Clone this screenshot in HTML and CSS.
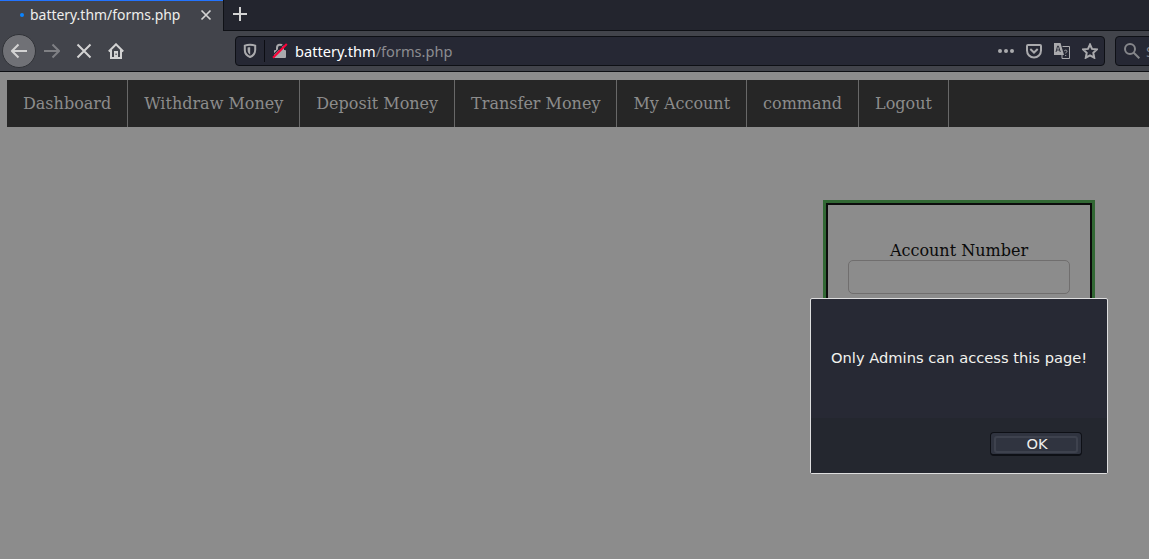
FILE: index.html
```html
<!DOCTYPE html>
<html lang="en">
<head>
<meta charset="utf-8">
<title>battery.thm/forms.php</title>
<link rel="stylesheet" href="styles.css">
</head>
<body>
<header class="browser">
  <div class="tabs">
    <div class="tab">
      <span class="loading"></span>
      <span class="tab-title">battery.thm/forms.php</span>
      <svg class="tab-close" width="12" height="12" viewBox="0 0 12 12"><path d="M1.500 1.500l9 9M10.500 1.500l-9 9"/></svg>
    </div>
    <div class="tab-strip"><svg class="new-tab" width="14" height="14" viewBox="0 0 14 14"><path d="M7 0v14M0 7h14"/></svg></div>
  </div>
  <div class="toolbar">
    <div class="back"><svg width="16" height="16" viewBox="0 0 16 16"><path d="M16 8H1.500M7.500 1.500L1 8l6.500 6.500"/></svg></div>
    <svg class="forward" width="16" height="16" viewBox="0 0 16 16"><path d="M0 8h14.500M8.500 1.500L15 8l-6.500 6.500"/></svg>
    <svg class="stop" width="16" height="16" viewBox="0 0 16 16"><path d="M1.500 1.500l13 13M14.500 1.500l-13 13"/></svg>
    <svg class="home" width="16" height="16" viewBox="0 0 16 16"><path d="M.8 8.500L8 1.300l7.200 7.200M3 7v8h10V7"/><path class="solid" fill-rule="evenodd" d="M6 8h4v8H6zM7.500 10.500v1.500h1.200v-1.500z"/></svg>
    <div class="urlbar">
      <svg class="shield" width="14" height="16" viewBox="0 0 14 16"><path d="M7 1.800c2 0 3.800.3 5.200.8v4.400c0 3.500-2 5.700-5.200 7-3.200-1.300-5.200-3.500-5.200-7V2.600C3.200 2.100 5 1.800 7 1.800z"/><path class="solid" d="M7.200 4.300v7.400C5.400 10.600 4.600 9 4.600 7V4.600C5.400 4.400 6 4.300 7.200 4.300z"/></svg>
      <span class="divider"></span>
      <svg class="lock" width="16" height="16" viewBox="0 0 16 16"><path d="M5 8V4.800a3 3 0 0 1 6 0V8"/><path class="solid" d="M3 7h10a1 1 0 0 1 1 1v6a1 1 0 0 1-1 1H3a1 1 0 0 1-1-1V8a1 1 0 0 1 1-1z"/><path class="gap" d="M-.2 13.300L13 .1"/><path class="slash" d="M1 14.800L14.800 1"/></svg>
      <span class="url"><b>battery.thm</b>/forms.php</span>
      <span class="actions">
        <svg width="16" height="16" viewBox="0 0 16 16"><g class="solid"><circle cx="2" cy="8" r="2"/><circle cx="8" cy="8" r="2"/><circle cx="14" cy="8" r="2"/></g></svg>
        <svg width="16" height="16" viewBox="0 0 16 16"><path d="M2 2h12a1 1 0 0 1 1 1v4.500a7 7 0 0 1-14 0V3a1 1 0 0 1 1-1zM4.300 6l3.700 3.500L11.700 6"/></svg>
        <svg class="translate" width="16" height="16" viewBox="0 0 16 16"><path class="page" d="M8.500 3.500h7v12H8V11M10.300 8.200c.2-1.500 3-1.300 2.700.2-.2.900-1.300.9-1.300 2M11.700 12v1"/><path class="solid" d="M0 0h6.500L10 12H0z"/><path class="letter" d="M2 9l1.600-6h.8L6.300 9M2.500 7h3.200"/></svg>
        <svg width="16" height="16" viewBox="0 0 16 16"><path d="M8 1.500l2 4.400 4.900.5-3.600 3.400.9 4.900L8 12.300l-4.200 2.400.9-4.900L1.100 6.400 6 5.900z"/></svg>
      </span>
    </div>
    <div class="searchbar">
      <svg width="16" height="16" viewBox="0 0 16 16"><circle cx="6" cy="6" r="5"/><path d="M9.500 9.500L15.300 15.300"/></svg>
      <span>Search</span>
    </div>
  </div>
</header>
<main class="page-content">
  <nav class="menu">
    <a>Dashboard</a><a>Withdraw Money</a><a>Deposit Money</a><a>Transfer Money</a><a>My Account</a><a>command</a><a>Logout</a>
  </nav>
  <form class="account-form">
    <label for="account">Account Number</label>
    <input id="account" type="text">
  </form>
</main>
<div class="dialog" role="alertdialog">
  <div class="message">Only Admins can access this page!</div>
  <div class="dialog-footer"><button class="ok"><span>OK</span></button></div>
</div>
</body>
</html>
```
FILE: styles.css
```css
* { box-sizing: border-box; }
html, body { height: 100%; }
body { margin: 0; overflow: hidden; background: #8c8c8c; display: flex; flex-direction: column; }
svg { display: block; flex: none; fill: none; stroke: #d3d3d3; stroke-width: 2; }
svg .solid { fill: #d3d3d3; stroke: none; }

.browser { flex: none; height: 72px; background: #42444b; border-bottom: 1px solid #0d0e12; font: 14.6px/20px "Noto Sans", sans-serif; }
.tabs { height: 31px; display: flex; background: #23252e; }
.tab { flex: none; width: 223px; display: flex; align-items: center; padding: 0 11px 2px 20px; background: #42444b; border-top: 1px solid #2374ff; color: #eeeeec; font-size: 13.95px; }
.loading { width: 4px; height: 4px; margin-right: 6px; border-radius: 50%; background: #0a84ff; }
.tab-title { flex: 1; white-space: nowrap; }
.tab-close { stroke-width: 1.7; }
.tab-strip { flex: 1; display: flex; padding: 7px 0 0 9px; border-left: 1px solid #0f1116; border-bottom: 1px solid #0f1116; }

.toolbar { height: 40px; display: flex; align-items: center; background: #42444b; overflow: hidden; }
.back { flex: none; width: 34px; height: 34px; margin-left: 2px; border: 1px solid #313338; border-radius: 50%; background: #707176; display: flex; align-items: center; justify-content: center; }
.forward { margin-left: 8px; opacity: .42; }
.stop, .home { margin-left: 16px; }
.urlbar { flex: none; width: 870px; height: 30px; margin-left: 111px; padding: 0 6px 0 7px; display: flex; align-items: center; background: #262834; border: 1px solid #0e1015; border-radius: 4px; }
.urlbar svg, .searchbar svg { stroke: #aaaaad; }
.urlbar svg .solid { fill: #aaaaad; }
.shield { stroke-width: 2; }
.divider { width: 1px; height: 22px; margin: 0 7px; background: #0c0d13; }
.urlbar .lock .gap { stroke: #262834; stroke-width: 1.2; }
.urlbar .lock .slash { stroke: #ff0039; stroke-width: 2; }
.url { flex: 1; margin-left: 7px; color: #8c8c90; }
.url b { font-weight: 400; color: #fff; }
.actions { display: flex; gap: 12px; }
.translate .page { stroke-width: 1; }
.translate .letter { stroke: #343641; stroke-width: 1; }
.searchbar { flex: none; width: 200px; height: 30px; margin-left: 10px; padding-left: 8px; display: flex; align-items: center; gap: 6px; background: #262834; border: 1px solid #0e1015; border-radius: 4px; color: #85868c; }
.searchbar svg { stroke: #85868a; }

.page-content { flex: 1; padding: 8px 0 0 7px; font: 16px/19px "DejaVu Serif", serif; }
.menu { display: flex; height: 47px; background: #262626; color: #8c8c8c; }
.menu a { padding: 14px 16px; border-right: 1px solid #686868; white-space: nowrap; }
.account-form { width: 272px; height: 250px; margin: 73px 0 0 816px; padding: 38px 22px 0; border: 3px solid #326834; outline: 2px solid #0c0c0c; outline-offset: -5px; text-align: center; color: #0a0a0a; }
.account-form label { display: block; }
.account-form input { display: block; width: 222px; height: 34px; border: 1px solid #706e6e; border-radius: 5px; background: #8c8c8c; }

.dialog { position: absolute; left: 810px; top: 298px; width: 298px; height: 176px; display: flex; flex-direction: column; background: #272934; border: 1px solid #dededf; border-radius: 2px; color: #f2f2ee; font: 14.667px/18px "DejaVu Sans", sans-serif; }
.message { height: 119px; padding: 50px 0 0 20px; white-space: nowrap; }
.dialog-footer { flex: 1; display: flex; justify-content: flex-end; padding: 14px 25px 0 0; background: #24272f; }
.ok { width: 92px; height: 24px; padding: 3px; border: 1px solid #0e1016; border-bottom-width: 2px; border-radius: 4px; background: #303440; color: #eeeeec; font: 14.667px/12px "DejaVu Sans", sans-serif; }
.ok span { display: flex; align-items: center; justify-content: center; height: 17px; padding: 0 0 2px 2px; border: 2px solid #3e424e; border-radius: 3px; }
```
